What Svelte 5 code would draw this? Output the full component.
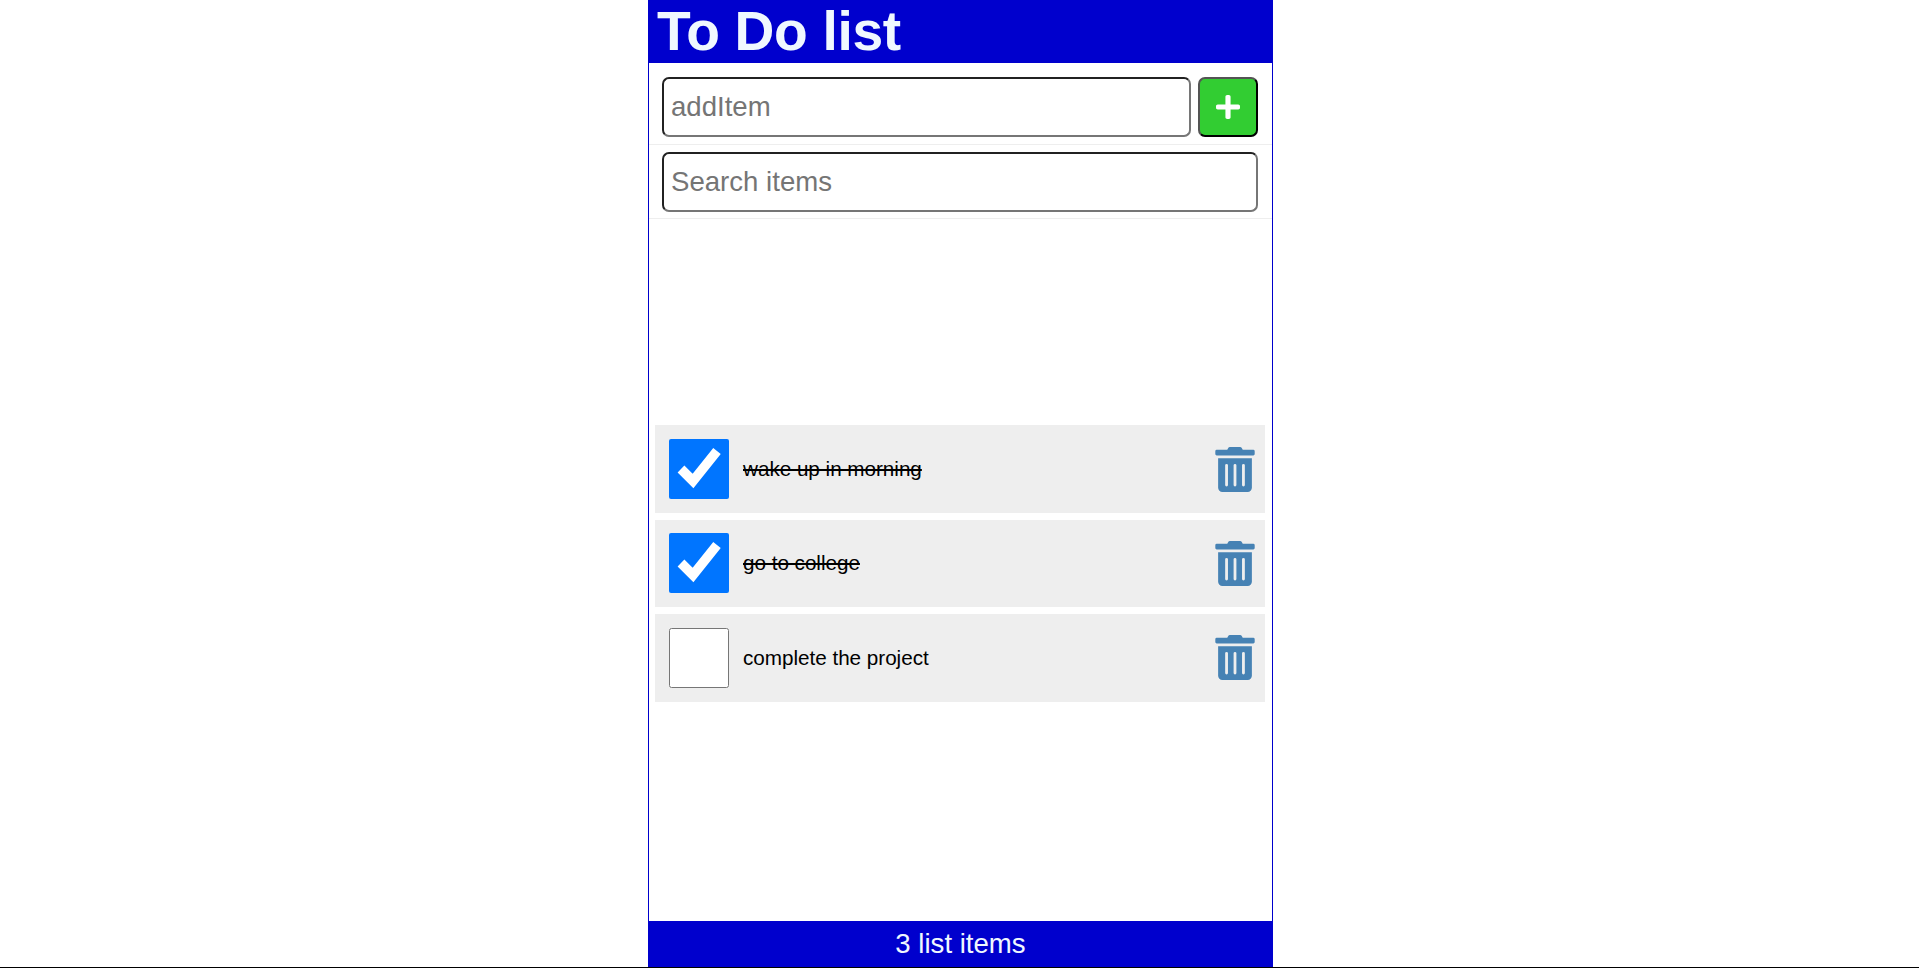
<script>
  let items = $state([
    { id: 1, checked: true, item: 'wake up in morning' },
    { id: 2, checked: true, item: 'go to college' },
    { id: 3, checked: false, item: 'complete the project' }
  ]);
  let newItem = $state('');
  let search = $state('');
  let visible = $derived(items.filter((i) => i.item.toLowerCase().includes(search.toLowerCase())));

  function add(e) {
    e.preventDefault();
    if (!newItem) return;
    items.push({ id: Date.now(), checked: false, item: newItem });
    newItem = '';
  }
  function remove(id) {
    items = items.filter((i) => i.id !== id);
  }
</script>

<div class="page">
  <div class="app">
    <header><h1>To Do list</h1></header>
    <form class="add" onsubmit={add}>
      <input type="text" placeholder="addItem" bind:value={newItem} />
      <button type="submit" aria-label="Add item">
        <svg viewBox="0 0 448 512"><path d="M416 208H272V64c0-17.67-14.33-32-32-32h-32c-17.67 0-32 14.33-32 32v144H32c-17.67 0-32 14.33-32 32v32c0 17.67 14.33 32 32 32h144v144c0 17.67 14.33 32 32 32h32c17.67 0 32-14.33 32-32V304h144c17.67 0 32-14.33 32-32v-32c0-17.67-14.33-32-32-32z" /></svg>
      </button>
    </form>
    <form class="search" onsubmit={(e) => e.preventDefault()}>
      <input type="text" placeholder="Search items" bind:value={search} />
    </form>
    <main>
      <ul>
        {#each visible as todo (todo.id)}
          <li>
            <input type="checkbox" bind:checked={todo.checked} />
            <span class="label" class:done={todo.checked}>{todo.item}</span>
            <svg class="trash" viewBox="0 0 448 512" role="button" tabindex="0" aria-label="Delete" onclick={() => remove(todo.id)} onkeydown={(e) => e.key === 'Enter' && remove(todo.id)}>
              <path d="M32 464a48 48 0 0 0 48 48h288a48 48 0 0 0 48-48V128H32zm272-256a16 16 0 0 1 32 0v224a16 16 0 0 1-32 0zm-96 0a16 16 0 0 1 32 0v224a16 16 0 0 1-32 0zm-96 0a16 16 0 0 1 32 0v224a16 16 0 0 1-32 0zM432 32H312l-9.4-18.7A24 24 0 0 0 281.1 0H166.8a23.72 23.72 0 0 0-21.4 13.3L136 32H16A16 16 0 0 0 0 48v32a16 16 0 0 0 16 16h416a16 16 0 0 0 16-16V48a16 16 0 0 0-16-16z" />
            </svg>
          </li>
        {/each}
      </ul>
    </main>
    <footer>{items.length} list items</footer>
  </div>
</div>

<style>
  * { box-sizing: border-box; margin: 0; padding: 0; }
  .page {
    height: 968px;
    display: flex;
    justify-content: center;
    padding-left: 2px;
    border-bottom: 1px solid #000;
    background: #fff;
    font-family: "Liberation Sans", Arial, sans-serif;
    font-size: 27.6px;
  }
  .app {
    width: 625px;
    height: 967px;
    display: flex;
    flex-direction: column;
    border: solid mediumblue;
    border-width: 0 1px;
  }
  header {
    height: 63px;
    padding-left: 8px;
    background: mediumblue;
    color: aliceblue;
  }
  h1 { font-size: 55.2px; line-height: 62px; letter-spacing: -0.35px; }
  form { display: flex; border-bottom: 1px solid #eee; }
  .add { height: 82px; padding: 14px 14px 0 13px; gap: 7px; }
  .search { height: 74px; padding: 7px 14px 0 13px; }
  input[type="text"] {
    flex: 1;
    min-width: 0;
    height: 60px;
    padding: 7px;
    border: 2px inset #767676;
    border-radius: 7px;
    font: inherit;
    outline: none;
    background: #fff;
  }
  button {
    width: 60px;
    height: 60px;
    display: grid;
    place-items: center;
    border: 2px outset #000;
    border-radius: 7px;
    background: limegreen;
    color: #fff;
  }
  button svg { width: 24px; height: 28px; fill: #fff; }
  main {
    flex: 1;
    min-height: 0;
    display: flex;
    flex-direction: column;
    justify-content: center;
    padding: 0 7px 13px 6px;
  }
  ul { list-style: none; display: flex; flex-direction: column; gap: 6.8px; }
  li {
    height: 87.6px;
    display: flex;
    align-items: center;
    padding: 0 10px 0.4px 14px;
    background: #eee;
  }
  input[type="checkbox"] { width: 60px; height: 60px; flex: none; }
  .label { flex: 1; padding-left: 14px; font-size: 20.7px; letter-spacing: -0.03px; }
  .done { text-decoration: line-through; text-decoration-thickness: 2px; }
  .trash { width: 40px; height: 45px; margin-top: 0.4px; fill: steelblue; flex: none; cursor: pointer; }
  footer {
    height: 46px;
    background: mediumblue;
    color: aliceblue;
    text-align: center;
    line-height: 46px;
  }
</style>
